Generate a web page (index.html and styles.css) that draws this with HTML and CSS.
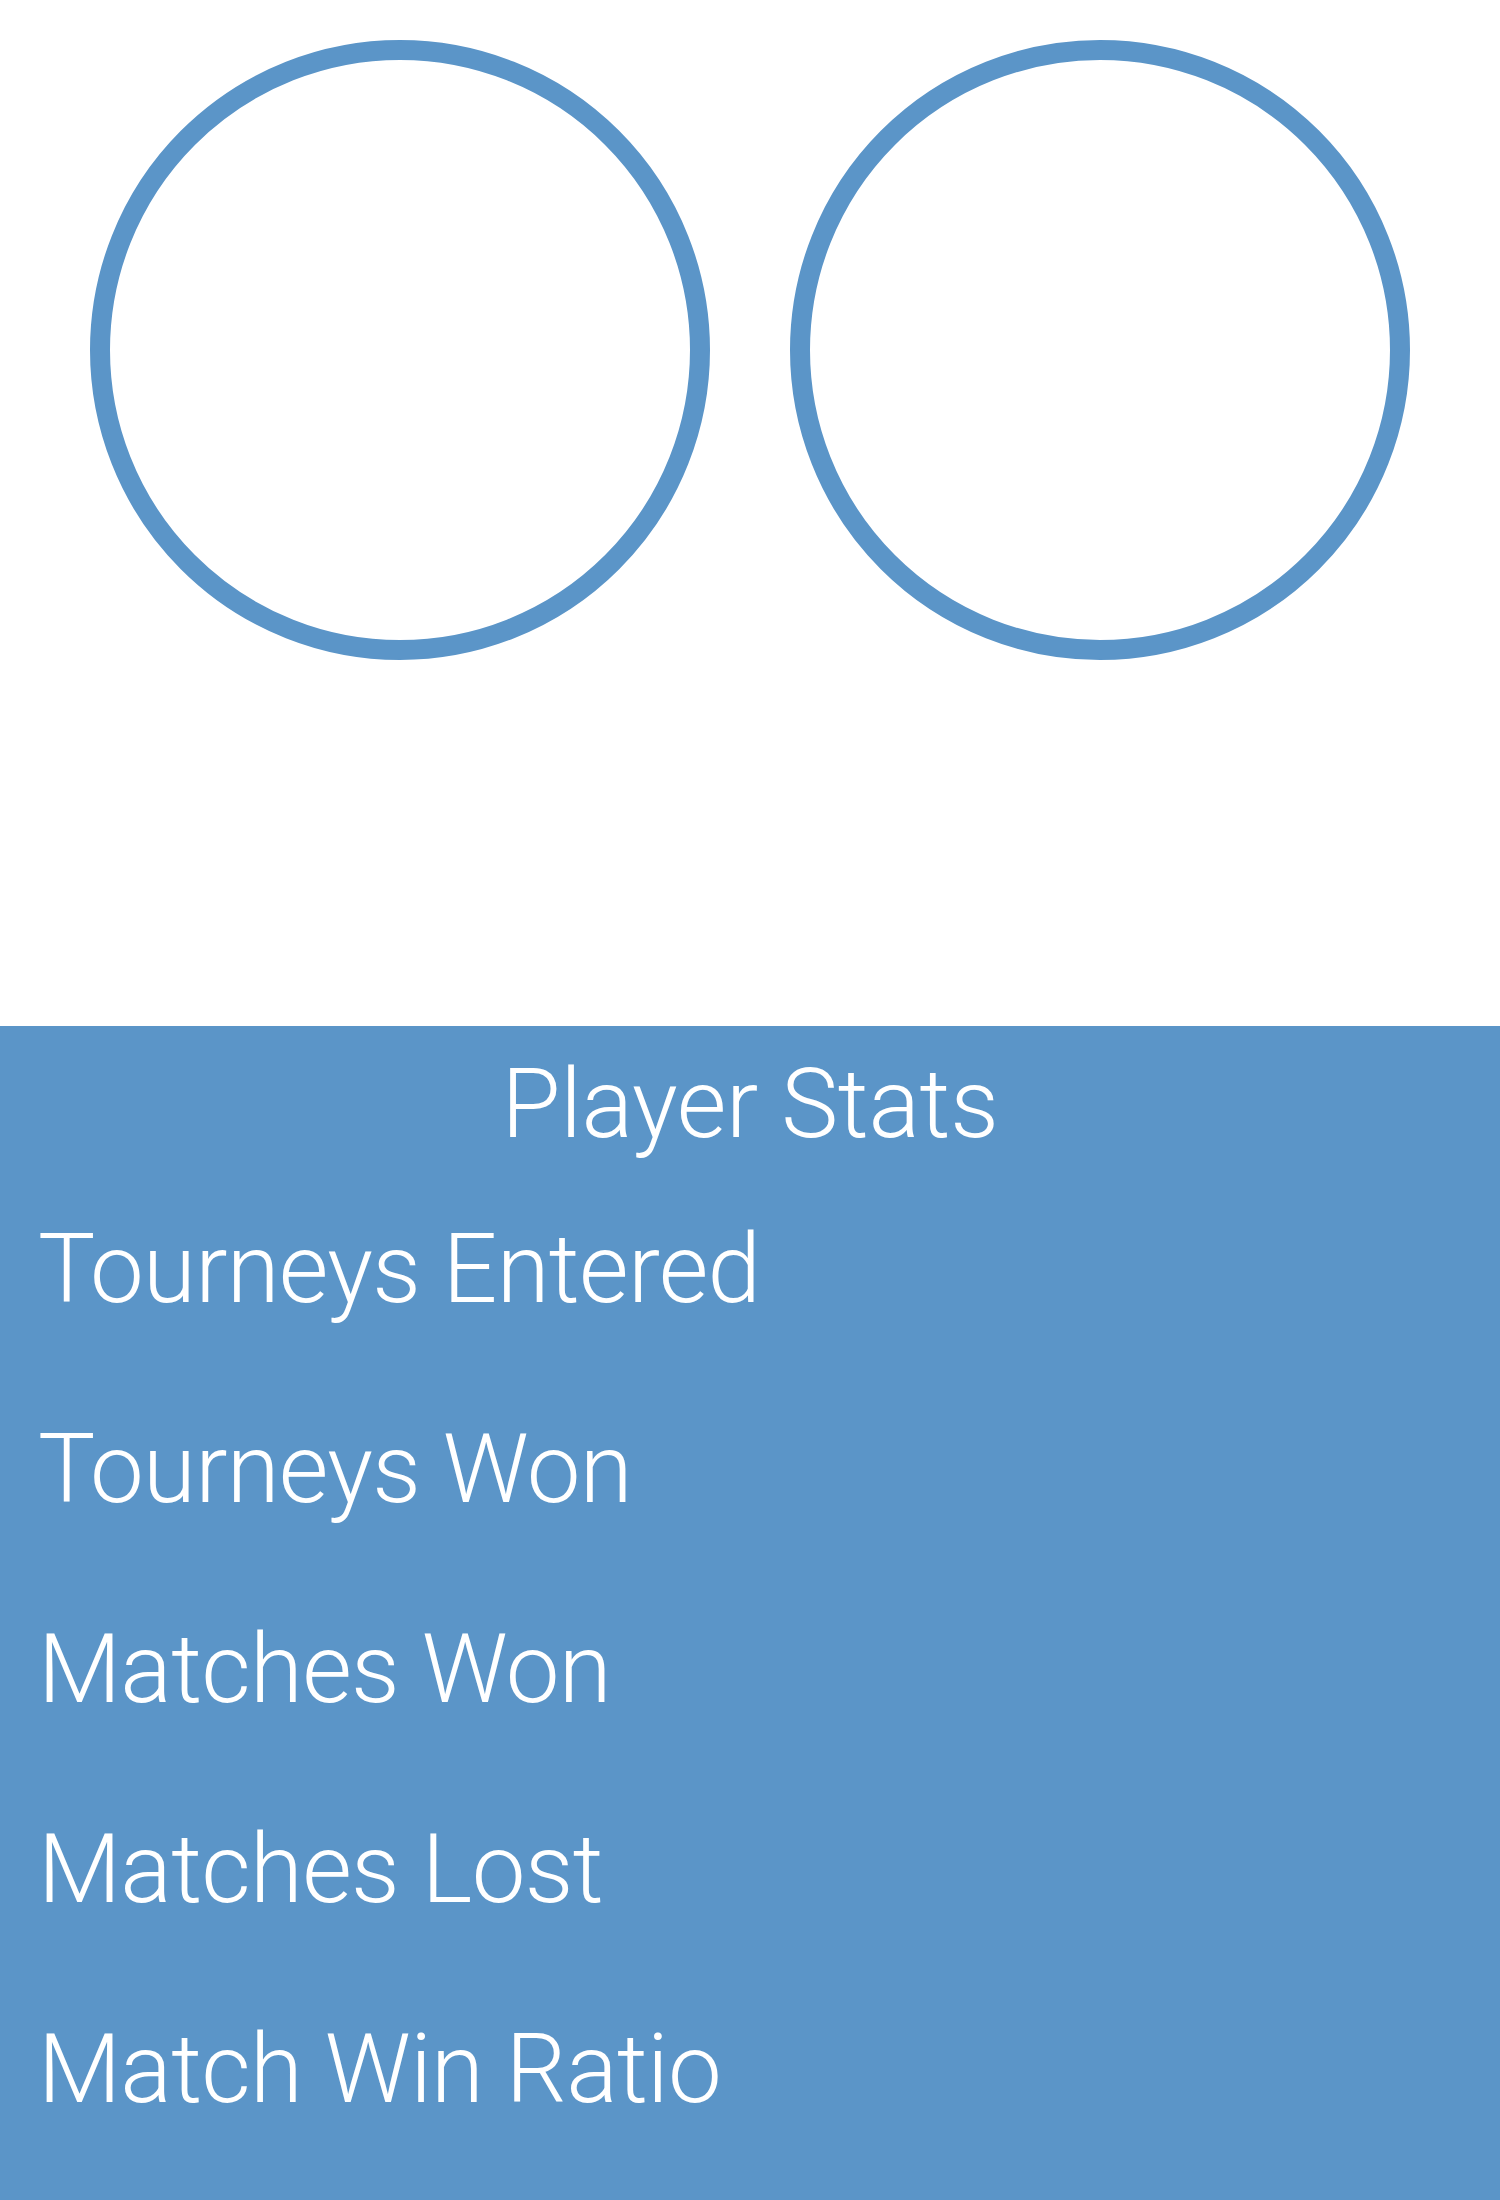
FILE: index.html
```html
<!DOCTYPE html>
<html lang="en">
<head>
<meta charset="utf-8">
<title>Player Stats</title>
<link rel="stylesheet" href="styles.css">
</head>
<body>
<div class="page">
  <section class="avatars">
    <div class="avatar"></div>
    <div class="avatar"></div>
  </section>
  <section class="stats">
    <h1 class="stats-title">Player Stats</h1>
    <ul class="stats-list">
      <li class="stats-item">Tourneys Entered</li>
      <li class="stats-item">Tourneys Won</li>
      <li class="stats-item">Matches Won</li>
      <li class="stats-item">Matches Lost</li>
      <li class="stats-item">Match Win Ratio</li>
    </ul>
  </section>
</div>
</body>
</html>
```
FILE: styles.css
```css
html, body {
  margin: 0;
  padding: 0;
  background: #ffffff;
}

.page {
  width: 1500px;
  min-height: 2200px;
  display: flex;
  flex-direction: column;
  font-family: Roboto, "Liberation Sans", sans-serif;
  font-weight: 300;
}

.avatars {
  height: 1026px;
  box-sizing: border-box;
  padding-top: 40px;
  display: flex;
  justify-content: center;
  align-items: flex-start;
  gap: 80px;
}

.avatar {
  width: 620px;
  height: 620px;
  box-sizing: border-box;
  border: 20px solid #5b95c8;
  border-radius: 50%;
  background: #ffffff;
}

.stats {
  flex: 1;
  background: #5b95c8;
  color: #ffffff;
  padding-top: 22px;
}

.stats-title {
  margin: 0 0 9px 0;
  font-size: 96px;
  font-weight: 300;
  line-height: 112px;
  text-align: center;
  letter-spacing: -0.3px;
}

.stats-list {
  list-style: none;
  margin: 0;
  padding: 0 0 0 38px;
}

.stats-item {
  font-size: 96px;
  line-height: 200px;
  height: 200px;
  letter-spacing: -0.7px;
}
```
